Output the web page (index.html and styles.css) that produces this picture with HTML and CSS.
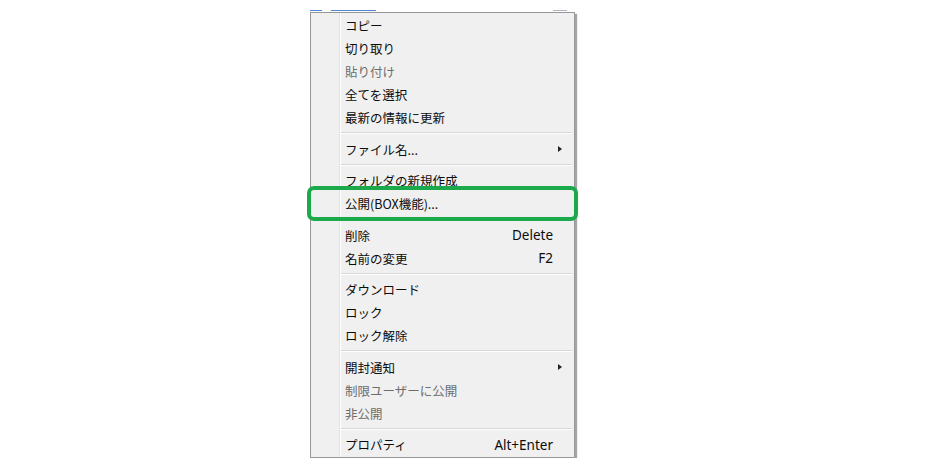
FILE: index.html
```html
<!DOCTYPE html>
<html lang="ja">
<head>
<meta charset="utf-8">
<link rel="stylesheet" href="styles.css">
</head>
<body>
<div class="stage">
  <div class="behind">
    <span class="frag f1"></span><span class="frag f2"></span><span class="spacer"></span><span class="frag f3"></span>
  </div>
  <div class="menu">
    <div class="item"><span class="label">コピー</span><span class="key"></span><span class="sub"></span></div>
    <div class="item"><span class="label">切り取り</span><span class="key"></span><span class="sub"></span></div>
    <div class="item disabled"><span class="label">貼り付け</span><span class="key"></span><span class="sub"></span></div>
    <div class="item"><span class="label">全てを選択</span><span class="key"></span><span class="sub"></span></div>
    <div class="item"><span class="label">最新の情報に更新</span><span class="key"></span><span class="sub"></span></div>
    <div class="sep"></div>
    <div class="item"><span class="label">ファイル名...</span><span class="key"></span><span class="sub"><i class="arrow"></i></span></div>
    <div class="sep"></div>
    <div class="item"><span class="label">フォルダの新規作成</span><span class="key"></span><span class="sub"></span></div>
    <div class="item marked"><span class="label">公開(BOX機能)...</span><span class="key"></span><span class="sub"></span></div>
    <div class="sep"></div>
    <div class="item"><span class="label">削除</span><span class="key">Delete</span><span class="sub"></span></div>
    <div class="item"><span class="label">名前の変更</span><span class="key">F2</span><span class="sub"></span></div>
    <div class="sep"></div>
    <div class="item"><span class="label">ダウンロード</span><span class="key"></span><span class="sub"></span></div>
    <div class="item"><span class="label">ロック</span><span class="key"></span><span class="sub"></span></div>
    <div class="item"><span class="label">ロック解除</span><span class="key"></span><span class="sub"></span></div>
    <div class="sep"></div>
    <div class="item"><span class="label">開封通知</span><span class="key"></span><span class="sub"><i class="arrow"></i></span></div>
    <div class="item disabled"><span class="label">制限ユーザーに公開</span><span class="key"></span><span class="sub"></span></div>
    <div class="item disabled"><span class="label">非公開</span><span class="key"></span><span class="sub"></span></div>
    <div class="sep"></div>
    <div class="item"><span class="label">プロパティ</span><span class="key">Alt+Enter</span><span class="sub"></span></div>
  </div>
</div>
</body>
</html>
```

FILE: styles.css
```css
html, body {
  margin: 0;
  background: #ffffff;
}

.stage {
  padding: 10px 0 0 310px;
  width: 268px;
}

.behind {
  display: flex;
  height: 2px;
  width: 265px;
}

.frag {
  display: block;
  height: 1px;
  background: #4f86d6;
}

.f1 { width: 12px; margin-right: 9px; }
.f2 { width: 45px; }
.spacer { flex: 1; }
.f3 { width: 14px; margin-right: 8px; background: #a9b4c4; }

.menu {
  width: 263px;
  border: 1px solid #979797;
  background-color: #f0f0f0;
  background-image: linear-gradient(to right,
    transparent 28px, #e2e2e2 28px, #e2e2e2 29px,
    #ffffff 29px, #ffffff 30px, transparent 30px);
  box-shadow: 2px 2px 1px rgba(0, 0, 0, 0.35);
  padding: 1px 0 1px 0;
  font-family: "Noto Sans CJK JP", "Noto Sans", sans-serif;
  font-size: 12.5px;
  color: #0c0c0c;
}

.item {
  height: 23px;
  display: flex;
  align-items: center;
  padding: 0 12px 0 34px;
  white-space: nowrap;
}

.item.disabled {
  color: #6d6d6d;
}

.label {
  flex: 1;
}

.key {
  font-family: "Noto Sans", sans-serif;
  font-size: 13.5px;
}

.sub {
  width: 9px;
  display: flex;
  justify-content: flex-end;
}

.arrow {
  display: block;
  width: 0;
  height: 0;
  border-top: 3.5px solid transparent;
  border-bottom: 3.5px solid transparent;
  border-left: 4px solid #222222;
}

.sep {
  height: 8.5px;
  margin: 0 2px 0 30px;
  display: flex;
  align-items: center;
}

.sep::before {
  content: "";
  flex: 1;
  height: 1px;
  background: #d7d7d7;
  border-bottom: 1px solid #ffffff;
}

.marked {
  position: relative;
}

.marked::after {
  content: "";
  position: absolute;
  top: -6px;
  bottom: -6px;
  left: -4px;
  right: -4px;
  border: 4px solid #1ba94c;
  border-radius: 7px;
}
```
